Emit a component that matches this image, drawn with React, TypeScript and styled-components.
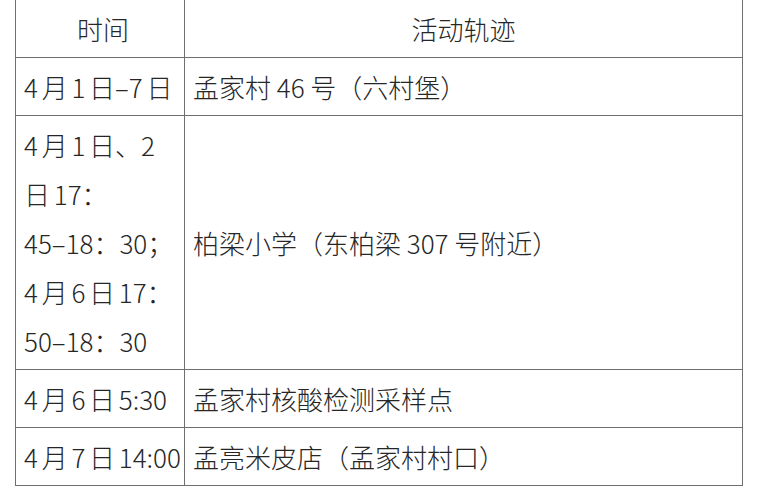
import React from "react";
import styled, { createGlobalStyle } from "styled-components";

const GlobalStyle = createGlobalStyle`
  html, body {
    margin: 0;
    padding: 0;
    background: #fff;
  }
  body {
    font-family: "Noto Sans CJK SC", "Noto Sans", sans-serif;
  }
`;

const Page = styled.div`
  width: 761px;
  height: 500px;
  overflow: hidden;
  padding-left: 15px;
  box-sizing: border-box;
`;

const Table = styled.table`
  width: 728px;
  table-layout: fixed;
  border-collapse: collapse;
  margin-top: -1px;
  color: #262626;
  font-size: 26px;
  line-height: 49px;
`;

const Cell = styled.td<{ $center?: boolean; $time?: boolean }>`
  border: 1px solid #6f6f6f;
  padding: ${(p) => (p.$time ? "4px 2px 4px 8px" : "4px 8px")};
  text-align: ${(p) => (p.$center ? "center" : "left")};
  word-spacing: ${(p) => (p.$time && !p.$center ? "-2px" : "0")};
  vertical-align: middle;
  white-space: nowrap;
  overflow: visible;
  font-weight: 300;
`;

const rows: { time: React.ReactNode; place: string }[] = [
  { time: "4 月 1 日–7 日", place: "孟家村 46 号（六村堡）" },
  {
    time: (
      <>
        4 月 1 日、2<br />日 17：<br />45–18：30；<br />4 月 6 日 17：<br />50–18：30
      </>
    ),
    place: "柏梁小学（东柏梁 307 号附近）",
  },
  { time: "4 月 6 日 5:30", place: "孟家村核酸检测采样点" },
  { time: "4 月 7 日 14:00", place: "孟亮米皮店（孟家村村口）" },
];

export default function App() {
  return (
    <>
      <GlobalStyle />
      <Page>
        <Table>
          <colgroup>
            <col style={{ width: 169 }} />
            <col />
          </colgroup>
          <tbody>
            <tr>
              <Cell $center $time>时间</Cell>
              <Cell $center>活动轨迹</Cell>
            </tr>
            {rows.map((r, i) => (
              <tr key={i}>
                <Cell $time>{r.time}</Cell>
                <Cell>{r.place}</Cell>
              </tr>
            ))}
          </tbody>
        </Table>
      </Page>
    </>
  );
}
